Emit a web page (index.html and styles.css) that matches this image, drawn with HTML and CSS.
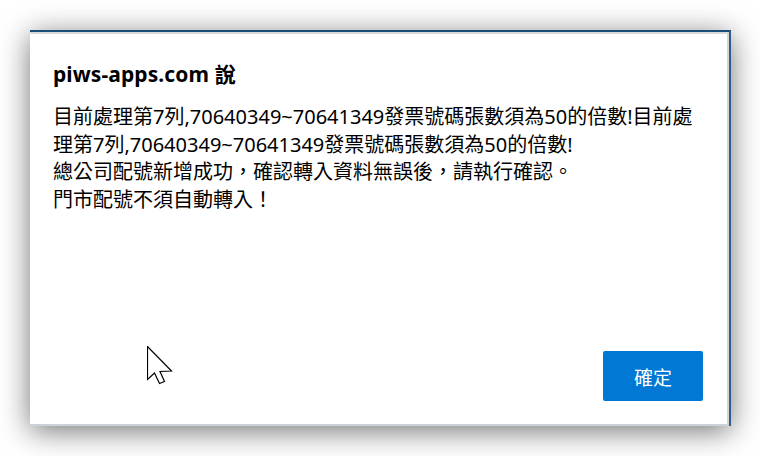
FILE: index.html
```html
<!DOCTYPE html>
<html lang="zh-Hant">
<head>
<meta charset="utf-8">
<title>piws-apps.com</title>
<link rel="stylesheet" href="styles.css">
</head>
<body>
<div class="stage">
  <div class="frame">
    <div class="dialog">
      <div class="title">piws-apps.com 說</div>
      <div class="message">
        <div class="line">目前處理第7列,70640349~70641349發票號碼張數須為50的倍數!目前處</div>
        <div class="line">理第7列,70640349~70641349發票號碼張數須為50的倍數!</div>
        <div class="line">總公司配號新增成功，確認轉入資料無誤後，請執行確認。</div>
        <div class="line">門市配號不須自動轉入！</div>
      </div>
      <div class="actions">
        <button class="ok">確定</button>
      </div>
    </div>
  </div>
  <svg class="cursor" width="27" height="40" viewBox="0 0 27 40">
    <path d="M0.5 0.5 V33.5 L7.5 27 L12.5 37.5 L17.5 35.5 L13 25.5 L24.5 25 Z" fill="#fff" stroke="#000" stroke-width="1.2" stroke-linejoin="miter"/>
  </svg>
</div>
</body>
</html>
```
FILE: styles.css
```css
html, body {
  margin: 0;
  padding: 0;
  background: #ffffff;
}
.stage {
  position: relative;
  width: 760px;
  height: 456px;
  padding: 30px 0 0 30px;
  box-sizing: border-box;
  font-family: "Noto Sans", "Noto Sans CJK TC", sans-serif;
  color: #000;
}
.frame {
  width: 701px;
  height: 396px;
  box-sizing: border-box;
  border-top: 2px solid #1c4c78;
  border-right: 2px solid #2e5e90;
  box-shadow: 0 5px 28px rgba(0, 0, 0, 0.55);
  background: #fff;
}
.dialog {
  height: 100%;
  box-sizing: border-box;
  background: #fff;
  border-top: 2px solid #dadada;
  border-right: 2px solid #d4d4d4;
  border-bottom: 2px solid #cdd1d8;
  padding: 26px 24px 23px 23px;
  display: flex;
  flex-direction: column;
}
.title {
  font-size: 21px;
  font-weight: 700;
  line-height: 28px;
  letter-spacing: 0.1px;
}
.message {
  margin-top: 15px;
  font-size: 20px;
  line-height: 27.7px;
  flex: 1;
}
.line {
  white-space: nowrap;
}
.actions {
  display: flex;
  justify-content: flex-end;
}
.ok {
  width: 100px;
  height: 50px;
  border: none;
  border-radius: 2px;
  background: #0078d4;
  color: #fff;
  font-family: "Noto Sans CJK TC", sans-serif;
  font-size: 19px;
  padding: 0;
}
.cursor {
  position: absolute;
  left: 147px;
  top: 346px;
}
```
